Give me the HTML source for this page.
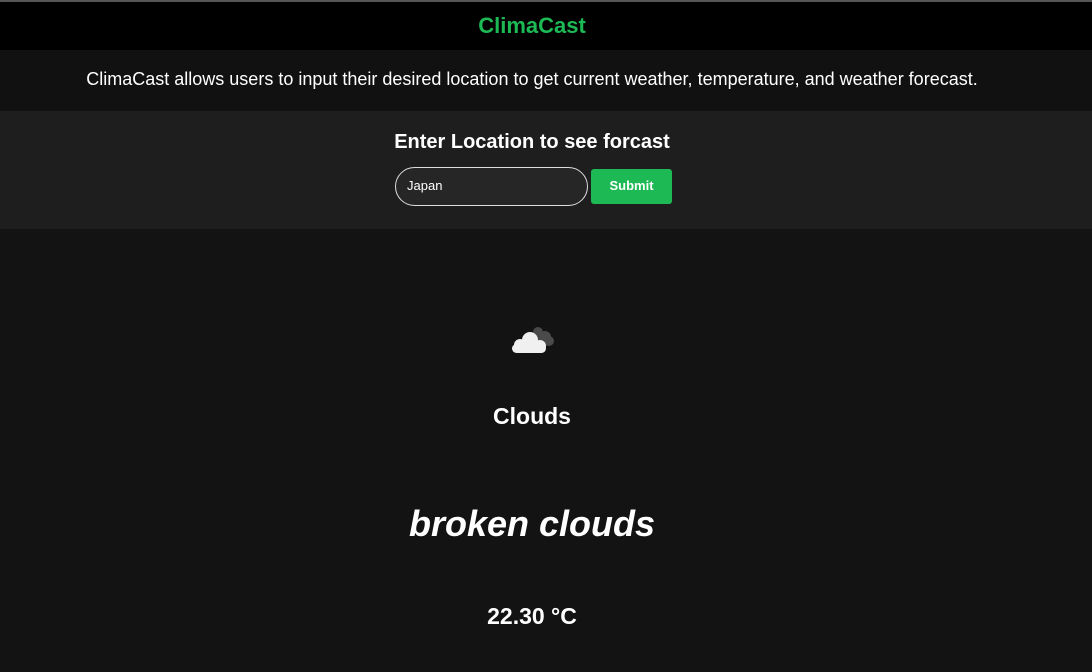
<!DOCTYPE html>
<html><head><style>
body{margin:0;width:1092px;height:672px;overflow:hidden;background:#131313;font-family:"Liberation Sans",Arial,sans-serif;color:#fff}
.top{height:2px;background:#555}
.hdr{height:48px;background:#000;color:#1db954;font-weight:bold;font-size:22px;line-height:48px}
.desc{height:61px;background:#111;font-size:18px;line-height:58px}
.c{width:1064px;text-align:center}
.form{height:118px;background:#1e1e1e;position:relative}
.form h2{margin:0;position:absolute;top:20px;font-size:20px}
.inp{position:absolute;left:395px;top:167px;width:193px;height:39px;border:1.5px solid #ddd;border-radius:20px;background:#262626;box-sizing:border-box;font-size:13px;line-height:36px;padding-left:11px}
.btn{position:absolute;left:591px;top:169px;width:81px;height:35px;background:#1db954;border-radius:3px;text-align:center;font-size:13px;font-weight:bold;line-height:34px}
.t{position:absolute;width:1064px;text-align:center;font-weight:bold}
</style></head><body>
<div class="top"></div>
<div class="hdr"><div class="c">ClimaCast</div></div>
<div class="desc"><div class="c">ClimaCast allows users to input their desired location to get current weather, temperature, and weather forecast.</div></div>
<div class="form"><h2 class="c">Enter Location to see forcast</h2></div>
<div class="inp">Japan</div>
<div class="btn">Submit</div>
<svg style="position:absolute;left:508px;top:320px" width="50" height="38" viewBox="0 0 50 38">
<g fill="#4a4a4a"><circle cx="30" cy="12" r="5"/><circle cx="37" cy="17" r="6"/><circle cx="41" cy="21" r="5"/><rect x="26" y="17" width="15" height="9" rx="4"/></g>
<g fill="#f0f0f0"><circle cx="22" cy="20" r="8"/><circle cx="12" cy="25" r="6"/><circle cx="32" cy="26" r="6"/><rect x="4" y="24" width="34" height="9" rx="4.5"/></g>
</svg>
<div class="t" style="top:403px;font-size:23px">Clouds</div>
<div class="t" style="top:503px;font-size:36px;font-style:italic">broken clouds</div>
<div class="t" style="top:603px;font-size:23px">22.30 °C</div>
</body></html>
